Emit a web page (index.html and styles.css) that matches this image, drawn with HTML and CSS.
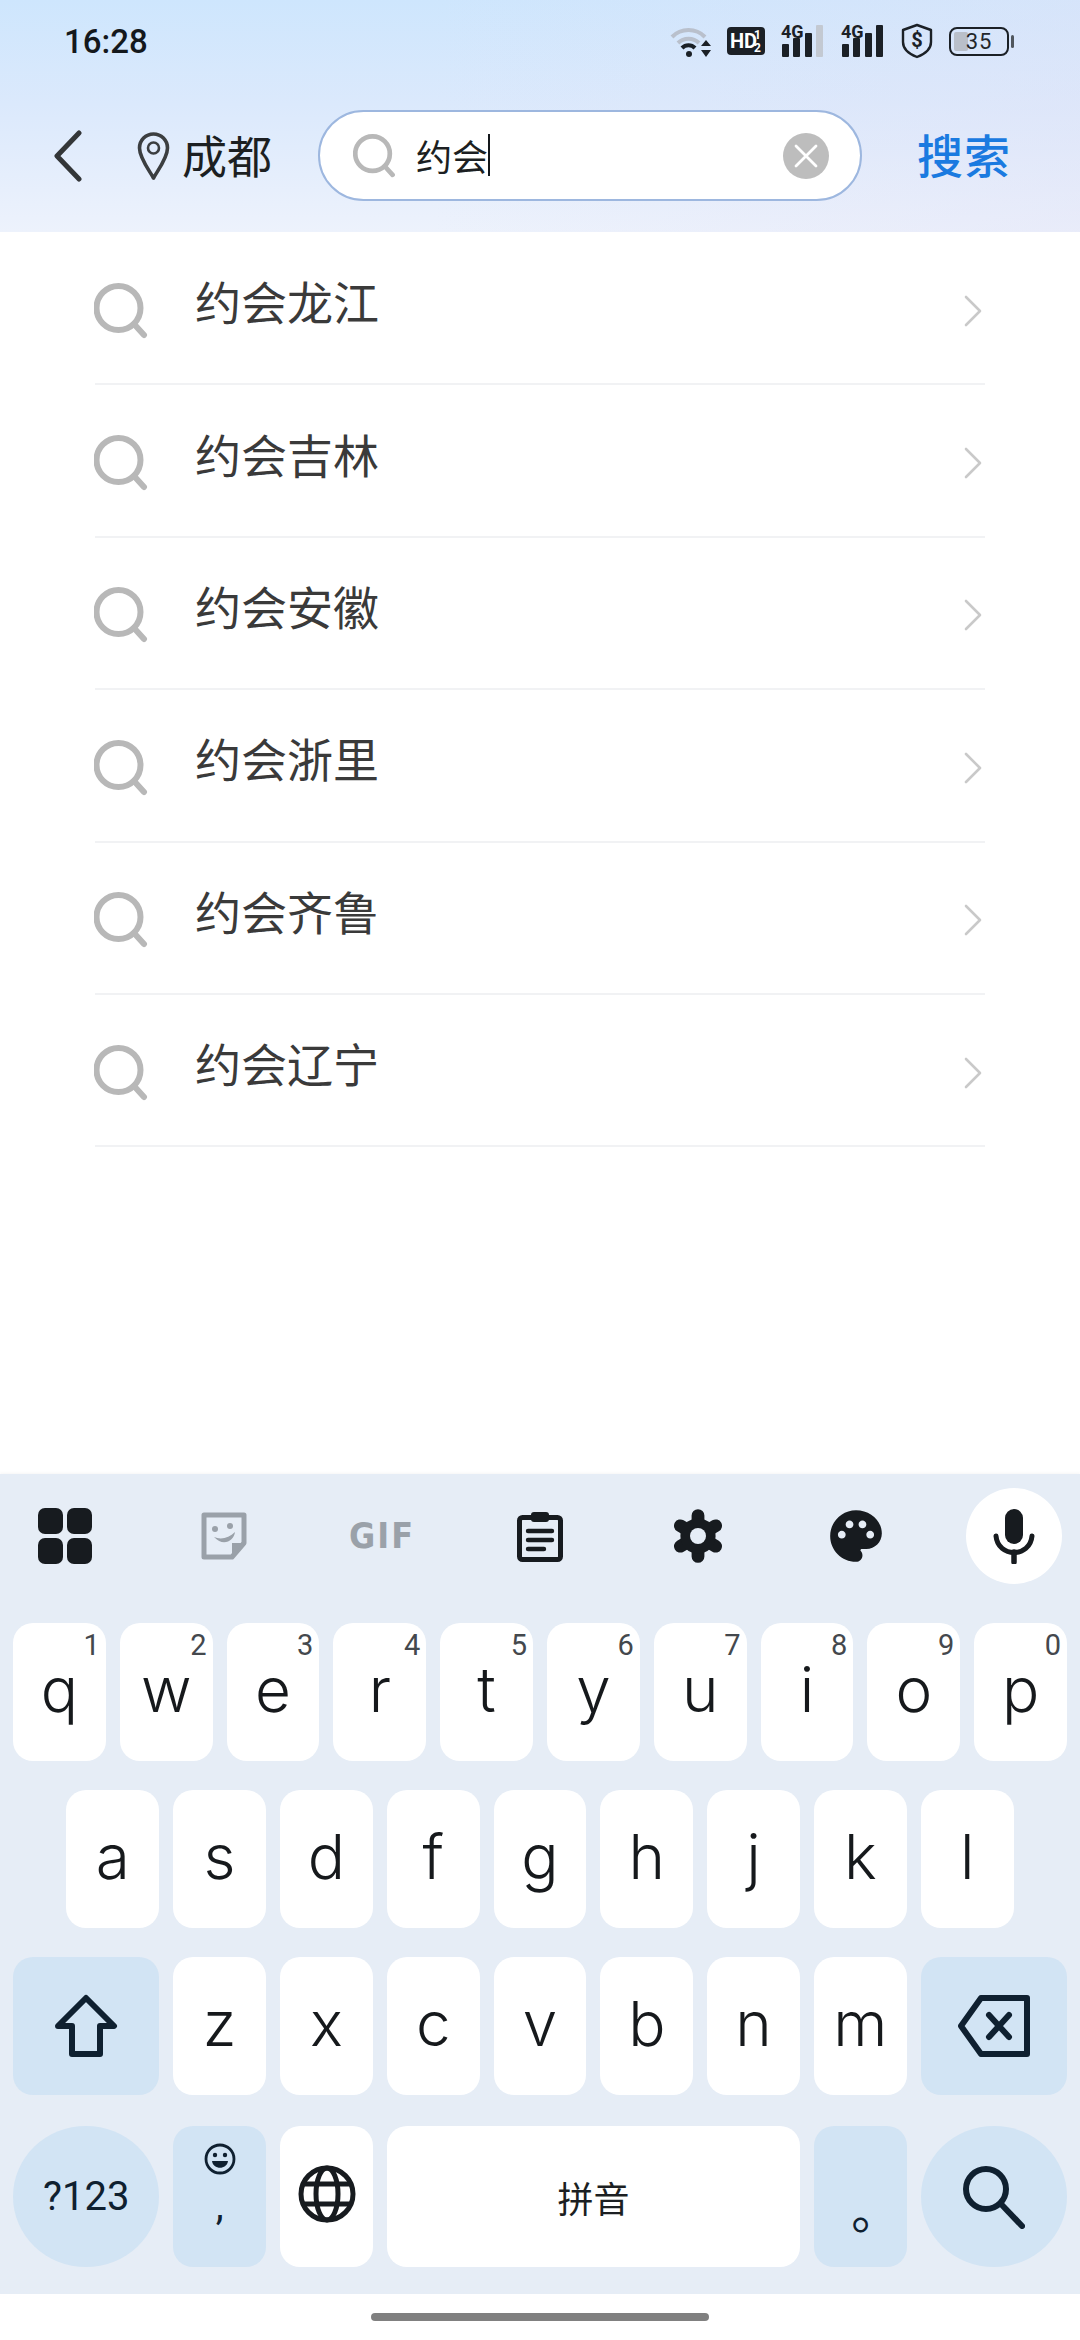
FILE: index.html
```html
<!DOCTYPE html>
<html lang="zh-CN">

<head>
    <meta charset="UTF-8">
    <meta name="viewport" content="width=device-width, initial-scale=1.0">
    <title>搜索</title>
    <link rel="stylesheet" href="styles.css">
</head>

<body>
    <svg class="defs" width="0" height="0">
        <symbol id="lens" viewBox="0 0 54 56">
            <circle cx="24.5" cy="25" r="22" fill="none" stroke="#b8b8b8" stroke-width="6" />
            <path d="M40 41 L50 52" stroke="#b8b8b8" stroke-width="6" stroke-linecap="round" />
        </symbol>
        <symbol id="more" viewBox="0 0 20 34">
            <path d="M3 3 L17 17 L3 31" fill="none" stroke="#c9c9c9" stroke-width="2.6" stroke-linecap="round" stroke-linejoin="round" />
        </symbol>
        <symbol id="signal" viewBox="0 0 44 34">
            <rect x="1" y="20" width="7" height="13" rx="1" />
            <rect x="12" y="14" width="7" height="19" rx="1" />
            <rect x="24" y="9" width="7" height="24" rx="1" />
        </symbol>
    </svg>

    <div class="page">
        <header class="top">
            <div class="status">
                <span class="time">16:28</span>
                <div class="status-icons">
                    <svg class="ic-wifi" width="41" height="33" viewBox="0 0 41 33">
                        <path d="M2 12 A23 23 0 0 1 35 12" fill="none" stroke="#b9c0cc" stroke-width="4" />
                        <path d="M8 18 A15 15 0 0 1 29 18" fill="none" stroke="#b9c0cc" stroke-width="4" />
                        <path d="M12 23 A9 9 0 0 1 25 23" fill="none" stroke="#1b2026" stroke-width="4" />
                        <circle cx="19" cy="29" r="3" fill="#1b2026" />
                        <path d="M36 15 L41 21 H31 Z M36 32 L41 25 H31 Z" fill="#1b2026" />
                    </svg>
                    <svg class="ic-hd" width="38" height="28" viewBox="0 0 38 28">
                        <rect width="38" height="28" rx="4" fill="#1b2026" />
                        <text x="3" y="21" class="hd-text">HD</text>
                        <text x="27" y="12" class="hd-small">1</text>
                        <text x="27" y="25" class="hd-small">2</text>
                    </svg>
                    <svg class="ic-sig" width="44" height="40" viewBox="0 -6 44 40" fill="#1b2026">
                        <text x="0" y="14" class="sig-text">4G</text>
                        <use href="#signal" width="44" height="34" />
                        <rect x="35" y="1" width="7" height="32" rx="1" fill="#c3c9d2" />
                    </svg>
                    <svg class="ic-sig" width="44" height="40" viewBox="0 -6 44 40" fill="#1b2026">
                        <text x="0" y="14" class="sig-text">4G</text>
                        <use href="#signal" width="44" height="34" />
                        <rect x="35" y="1" width="7" height="32" rx="1" />
                    </svg>
                    <svg class="ic-shield" width="32" height="36" viewBox="0 0 32 36">
                        <path d="M16 2 L30 7 V19 C30 26 24 31 16 34 C8 31 2 26 2 19 V7 Z" fill="none" stroke="#1b2026" stroke-width="2.4" stroke-linejoin="round" />
                        <text x="16" y="24" text-anchor="middle" class="shield-text">$</text>
                    </svg>
                    <div class="battery">
                        <span class="battery-fill"></span>
                        <span class="battery-num">35</span>
                    </div>
                </div>
            </div>
            <div class="nav">
                <svg class="back" width="30" height="52" viewBox="0 0 30 52">
                    <path d="M26 3 L4 26 L26 49" fill="none" stroke="#333638" stroke-width="5" stroke-linecap="round" stroke-linejoin="round" />
                </svg>
                <svg class="pin" width="33" height="50" viewBox="0 0 33 50">
                    <path d="M16.5 47 C12 39 2.5 27 2.5 17 A14 14 0 0 1 30.5 17 C30.5 27 21 39 16.5 47 Z" fill="none" stroke="#3b3e40" stroke-width="3.6" stroke-linejoin="round" />
                    <circle cx="16.5" cy="17" r="5.5" fill="none" stroke="#3b3e40" stroke-width="2.6" />
                </svg>
                <span class="city">成都</span>
                <div class="search-box">
                    <svg class="box-lens" width="43" height="44">
                        <use href="#lens" />
                    </svg>
                    <span class="query">约会<i class="caret"></i></span>
                    <span class="clear">
                        <svg width="28" height="28" viewBox="0 0 28 28">
                            <path d="M4 4 L24 24 M24 4 L4 24" stroke="#fff" stroke-width="2.8" stroke-linecap="round" />
                        </svg>
                    </span>
                </div>
                <span class="go">搜索</span>
            </div>
        </header>

        <main class="list">
            <div class="row">
                <svg class="row-lens" width="54" height="56"><use href="#lens" /></svg>
                <span class="row-text">约会龙江</span>
                <svg class="row-more" width="20" height="34"><use href="#more" /></svg>
            </div>
            <div class="row">
                <svg class="row-lens" width="54" height="56"><use href="#lens" /></svg>
                <span class="row-text">约会吉林</span>
                <svg class="row-more" width="20" height="34"><use href="#more" /></svg>
            </div>
            <div class="row">
                <svg class="row-lens" width="54" height="56"><use href="#lens" /></svg>
                <span class="row-text">约会安徽</span>
                <svg class="row-more" width="20" height="34"><use href="#more" /></svg>
            </div>
            <div class="row">
                <svg class="row-lens" width="54" height="56"><use href="#lens" /></svg>
                <span class="row-text">约会浙里</span>
                <svg class="row-more" width="20" height="34"><use href="#more" /></svg>
            </div>
            <div class="row">
                <svg class="row-lens" width="54" height="56"><use href="#lens" /></svg>
                <span class="row-text">约会齐鲁</span>
                <svg class="row-more" width="20" height="34"><use href="#more" /></svg>
            </div>
            <div class="row">
                <svg class="row-lens" width="54" height="56"><use href="#lens" /></svg>
                <span class="row-text">约会辽宁</span>
                <svg class="row-more" width="20" height="34"><use href="#more" /></svg>
            </div>
        </main>

        <section class="keyboard">
            <div class="tools">
                <span class="tool">
                    <svg class="grid-ic" width="54" height="56" viewBox="0 0 54 56" fill="#171b1f">
                        <rect x="0" y="0" width="25" height="26" rx="7" />
                        <rect x="29" y="0" width="25" height="26" rx="7" />
                        <rect x="0" y="30" width="25" height="26" rx="7" />
                        <rect x="29" y="30" width="25" height="26" rx="7" />
                    </svg>
                </span>
                <span class="tool">
                    <svg width="46" height="48" viewBox="0 0 46 48">
                        <path d="M3 3 H43 V31 L31 45 H3 Z" fill="none" stroke="#9aa1a9" stroke-width="5" stroke-linejoin="round" />
                        <path d="M43 31 H31 V45 Z" fill="#9aa1a9" />
                        <circle cx="14" cy="17" r="3" fill="#9aa1a9" />
                        <circle cx="29" cy="14" r="3" fill="#9aa1a9" />
                        <path d="M13 25 C20 28 28 26 34 20 C33 29 22 35 13 25 Z" fill="#9aa1a9" />
                    </svg>
                </span>
                <span class="tool gif"><span class="gif-text">GIF</span></span>
                <span class="tool">
                    <svg width="46" height="52" viewBox="0 0 46 52">
                        <rect x="2.5" y="7.5" width="41" height="42" rx="3" fill="none" stroke="#171b1f" stroke-width="5" />
                        <rect x="14" y="2" width="18" height="10" rx="3" fill="#171b1f" />
                        <path d="M11 21 H35 M11 30 H35 M11 39 H27" stroke="#171b1f" stroke-width="4.4" stroke-linecap="round" />
                    </svg>
                </span>
                <span class="tool">
                    <svg width="52" height="54" viewBox="-13 -13.5 26 27">
                        <g stroke="#171b1f" stroke-width="6.4" stroke-linecap="round">
                            <path d="M0 -6 V-10.2 M0 6 V10.2 M-5.2 -3 L-8.8 -5.1 M5.2 -3 L8.8 -5.1 M-5.2 3 L-8.8 5.1 M5.2 3 L8.8 5.1" />
                        </g>
                        <circle r="8.8" fill="#171b1f" />
                        <circle r="4" fill="#e6edf6" />
                    </svg>
                </span>
                <span class="tool">
                    <svg width="62" height="62" viewBox="0 0 24 24" fill="#171b1f">
                        <path d="M12 2C6.49 2 2 6.49 2 12s4.49 10 10 10c1.38 0 2.5-1.12 2.5-2.5 0-.61-.23-1.2-.64-1.67-.08-.1-.13-.21-.13-.33 0-.28.22-.5.5-.5H16c3.31 0 6-2.69 6-6 0-4.96-4.49-9-10-9zm-5.5 11c-.83 0-1.5-.67-1.5-1.5S5.67 10 6.5 10s1.5.67 1.5 1.5S7.33 13 6.5 13zm3-4C8.67 9 8 8.33 8 7.5S8.67 6 9.5 6s1.5.67 1.5 1.5S10.33 9 9.5 9zm5 0c-.83 0-1.5-.67-1.5-1.5S13.67 6 14.5 6s1.5.67 1.5 1.5S15.33 9 14.5 9zm3 4c-.83 0-1.5-.67-1.5-1.5s.67-1.5 1.5-1.5 1.5.67 1.5 1.5-.67 1.5-1.5 1.5z" />
                    </svg>
                </span>
                <span class="tool mic">
                    <svg width="42" height="56" viewBox="0 0 42 56">
                        <rect x="12" y="1" width="18" height="35" rx="9" fill="#171b1f" />
                        <path d="M3 28 C5 50 37 50 39 28" fill="none" stroke="#171b1f" stroke-width="5" stroke-linecap="round" />
                        <path d="M21 44 V54" stroke="#171b1f" stroke-width="5.5" stroke-linecap="round" />
                    </svg>
                </span>
            </div>

            <div class="keys">
                <div class="key-row">
                    <span class="key">q<sup class="hint">1</sup></span>
                    <span class="key">w<sup class="hint">2</sup></span>
                    <span class="key">e<sup class="hint">3</sup></span>
                    <span class="key">r<sup class="hint">4</sup></span>
                    <span class="key">t<sup class="hint">5</sup></span>
                    <span class="key">y<sup class="hint">6</sup></span>
                    <span class="key">u<sup class="hint">7</sup></span>
                    <span class="key">i<sup class="hint">8</sup></span>
                    <span class="key">o<sup class="hint">9</sup></span>
                    <span class="key">p<sup class="hint">0</sup></span>
                </div>
                <div class="key-row">
                    <span class="key">a</span>
                    <span class="key">s</span>
                    <span class="key">d</span>
                    <span class="key">f</span>
                    <span class="key">g</span>
                    <span class="key">h</span>
                    <span class="key">j</span>
                    <span class="key">k</span>
                    <span class="key">l</span>
                </div>
                <div class="key-row">
                    <span class="key wide fn">
                        <svg width="66" height="64" viewBox="0 0 66 64">
                            <path d="M33 4 L61 32 H47 V60 H19 V32 H5 Z" fill="none" stroke="#0f2030" stroke-width="6" stroke-linejoin="round" />
                        </svg>
                    </span>
                    <span class="key">z</span>
                    <span class="key">x</span>
                    <span class="key">c</span>
                    <span class="key">v</span>
                    <span class="key">b</span>
                    <span class="key">n</span>
                    <span class="key">m</span>
                    <span class="key wide fn">
                        <svg width="72" height="62" viewBox="0 0 72 62">
                            <path d="M23 3 H69 V59 H23 L3 31 Z" fill="none" stroke="#0f2030" stroke-width="6" stroke-linejoin="round" />
                            <path d="M31 20 L51 42 M51 20 L31 42" stroke="#0f2030" stroke-width="6" stroke-linecap="round" />
                        </svg>
                    </span>
                </div>
                <div class="key-row last">
                    <span class="key wide fn round sym">?123</span>
                    <span class="key fn comma">
                        <svg width="32" height="32" viewBox="0 0 32 32">
                            <circle cx="16" cy="16" r="14" fill="none" stroke="#0f2030" stroke-width="2.8" />
                            <circle cx="11" cy="12" r="2.2" fill="#0f2030" />
                            <circle cx="21" cy="12" r="2.2" fill="#0f2030" />
                            <path d="M8 18 H24 C23 27 9 27 8 18 Z" fill="#0f2030" />
                        </svg>
                        <span class="comma-mark">,</span>
                    </span>
                    <span class="key">
                        <svg width="58" height="58" viewBox="0 0 58 58" fill="none" stroke="#171b1f" stroke-width="5">
                            <circle cx="29" cy="29" r="26" />
                            <ellipse cx="29" cy="29" rx="11" ry="26" />
                            <path d="M6 19 H52 M6 39 H52" />
                        </svg>
                    </span>
                    <span class="key space">拼音</span>
                    <span class="key fn period"><span class="period-mark">。</span></span>
                    <span class="key wide fn round">
                        <svg width="62" height="64" viewBox="0 0 62 64" fill="none" stroke="#0f2030" stroke-width="6" stroke-linecap="round">
                            <circle cx="23" cy="24" r="20" />
                            <path d="M38 39 L59 61" />
                        </svg>
                    </span>
                </div>
            </div>
        </section>

        <div class="home">
            <span class="home-bar"></span>
        </div>
    </div>
</body>

</html>
```

FILE: styles.css
```css
* {
    box-sizing: border-box;
    margin: 0;
    padding: 0;
    font-family: Roboto, "Noto Sans CJK SC", sans-serif;
}

html,
body {
    width: 1080px;
    height: 2340px;
    overflow: hidden;
    background: #fff;
}

.defs {
    display: block;
    height: 0;
}

.page {
    display: flex;
    flex-direction: column;
    height: 2340px;
}

/* top bar */
.top {
    flex: none;
    height: 232px;
    background:
        linear-gradient(90deg, rgba(226, 226, 246, 0) 40%, rgba(226, 226, 246, 0.4) 100%),
        linear-gradient(180deg, #cee6fd 0%, #dbe9fc 45%, #edf2fc 100%);
}

.status {
    display: flex;
    justify-content: space-between;
    align-items: center;
    height: 82px;
    padding: 0 71px 0 64px;
}

.time {
    font-size: 33px;
    font-weight: 500;
    color: #14181c;
}

.status-icons {
    display: flex;
    align-items: center;
    gap: 16px;
}

.ic-sig {
    margin-top: -6px;
}

.hd-text {
    font-family: "Roboto";
    font-size: 20px;
    font-weight: 700;
    fill: #fff;
}

.hd-small {
    font-family: "Roboto";
    font-size: 12px;
    font-weight: 700;
    fill: #fff;
}

.sig-text {
    font-family: "Roboto";
    font-size: 18px;
    font-weight: 700;
    fill: #1b2026;
}

.shield-text {
    font-family: "Roboto";
    font-size: 20px;
    font-weight: 700;
    fill: #1b2026;
}

.battery {
    position: relative;
    display: flex;
    justify-content: center;
    align-items: center;
    width: 60px;
    height: 29px;
    border: 2.4px solid #1b2026;
    border-radius: 8px;
}

.battery::after {
    content: "";
    position: absolute;
    right: -7px;
    top: 6px;
    width: 3px;
    height: 13px;
    background: #50565d;
    border-radius: 2px;
}

.battery-fill {
    position: absolute;
    left: 3px;
    top: 3px;
    bottom: 3px;
    width: 14px;
    background: #b9bfc9;
    border-radius: 2px;
}

.battery-num {
    position: relative;
    font-size: 22px;
    letter-spacing: 1px;
    color: #22262b;
}

.nav {
    display: flex;
    align-items: center;
    height: 91px;
    margin-top: 28px;
    padding-left: 53px;
}

.back {
    margin-right: 54px;
}

.pin {
    margin-right: 12px;
}

.city {
    margin-bottom: 2px;
    font-size: 45px;
    color: #1c1f22;
}

.search-box {
    display: flex;
    align-items: center;
    width: 544px;
    height: 91px;
    margin-left: 46px;
    padding: 0 31px 0 33px;
    background: #fff;
    border: 2px solid #9db7df;
    border-radius: 46px;
}

.box-lens {
    margin-right: 20px;
}

.query {
    flex: 1;
    display: flex;
    align-items: center;
    margin-bottom: 2px;
    font-size: 36px;
    color: #1c1f22;
}

.caret {
    width: 2px;
    height: 42px;
    background: #14181c;
}

.clear {
    display: flex;
    justify-content: center;
    align-items: center;
    width: 46px;
    height: 46px;
    background: #bdbdbd;
    border-radius: 50%;
}

.go {
    margin: 0 0 6px 55px;
    font-size: 46px;
    font-weight: 500;
    letter-spacing: 1px;
    color: #1a7ae0;
}

/* suggestion list */
.list {
    flex: 1;
    background: #fff;
}

.row {
    display: flex;
    align-items: center;
    height: 152.4px;
    margin: 0 95px;
    padding-right: 2px;
    border-bottom: 2px solid #f1f2f4;
}

.row:first-child {
    margin-top: 1px;
}

.row-lens {
    margin: 5px 0 0 -1px;
}

.row-text {
    flex: 1;
    margin: 0 0 16px 47px;
    font-size: 46px;
    color: #3a3a3a;
}

.row-more {
    margin-top: 5px;
}

/* keyboard */
.keyboard {
    flex: none;
    height: 820px;
    padding-top: 14px;
    background: #e6edf6;
    box-shadow: 0 -1px 3px rgba(0, 0, 0, 0.04);
}

.tools {
    display: flex;
    justify-content: space-between;
    padding: 0 18px;
}

.tool {
    display: flex;
    justify-content: center;
    align-items: center;
    width: 96px;
    height: 96px;
}

.grid-ic {
    margin-left: -2px;
}

.gif-text {
    display: block;
    font-family: "DejaVu Sans", sans-serif;
    font-size: 32px;
    font-weight: 700;
    letter-spacing: 2px;
    color: #9aa1a9;
    transform: scaleY(1.1);
}

.mic {
    background: #fff;
    border-radius: 50%;
}

.keys {
    display: flex;
    flex-direction: column;
    gap: 29px;
    margin-top: 39px;
}

.key-row {
    display: flex;
    justify-content: center;
    gap: 14px;
    height: 138px;
    padding: 0 13px;
}

.key-row.last {
    height: 141px;
    margin-top: 2px;
}

.key {
    position: relative;
    flex: 0 0 92.8px;
    display: flex;
    justify-content: center;
    align-items: center;
    padding-bottom: 6px;
    background: #fff;
    border-radius: 20px;
    font-family: Inter, sans-serif;
    font-size: 62px;
    font-weight: 300;
    color: #16191c;
}

.hint {
    position: absolute;
    top: 5px;
    right: 6px;
    font-family: Roboto, sans-serif;
    font-size: 29px;
    font-weight: 400;
    line-height: 1.2;
    color: #44484d;
}

.key.wide {
    flex: 0 0 146.4px;
}

.key.fn {
    padding-bottom: 0;
    background: #d2e4f4;
    color: #0f2030;
}

.key.round {
    border-radius: 50%;
}

.key.sym {
    font-family: Roboto, sans-serif;
    font-size: 40px;
    font-weight: 400;
}

.key.comma {
    flex-direction: column;
    justify-content: flex-start;
    padding: 17px 0 0;
}

.comma-mark {
    margin-top: 7px;
    font-family: Roboto, sans-serif;
    font-size: 40px;
    font-weight: 400;
    line-height: 48px;
}

.key.space {
    flex: 1;
    padding: 0;
    font-family: "Noto Sans CJK SC", sans-serif;
    font-size: 36px;
    font-weight: 400;
    color: #1c1f22;
}

.key.period {
    align-items: flex-end;
    padding: 0 0 29px 30px;
}

.period-mark {
    font-family: "Noto Sans CJK SC", sans-serif;
    font-size: 48px;
    font-weight: 400;
    line-height: 60px;
}

.home {
    flex: none;
    display: flex;
    justify-content: center;
    align-items: center;
    height: 46px;
    background: #fff;
}

.home-bar {
    width: 338px;
    height: 8px;
    background: #808080;
    border-radius: 4px;
}
```
